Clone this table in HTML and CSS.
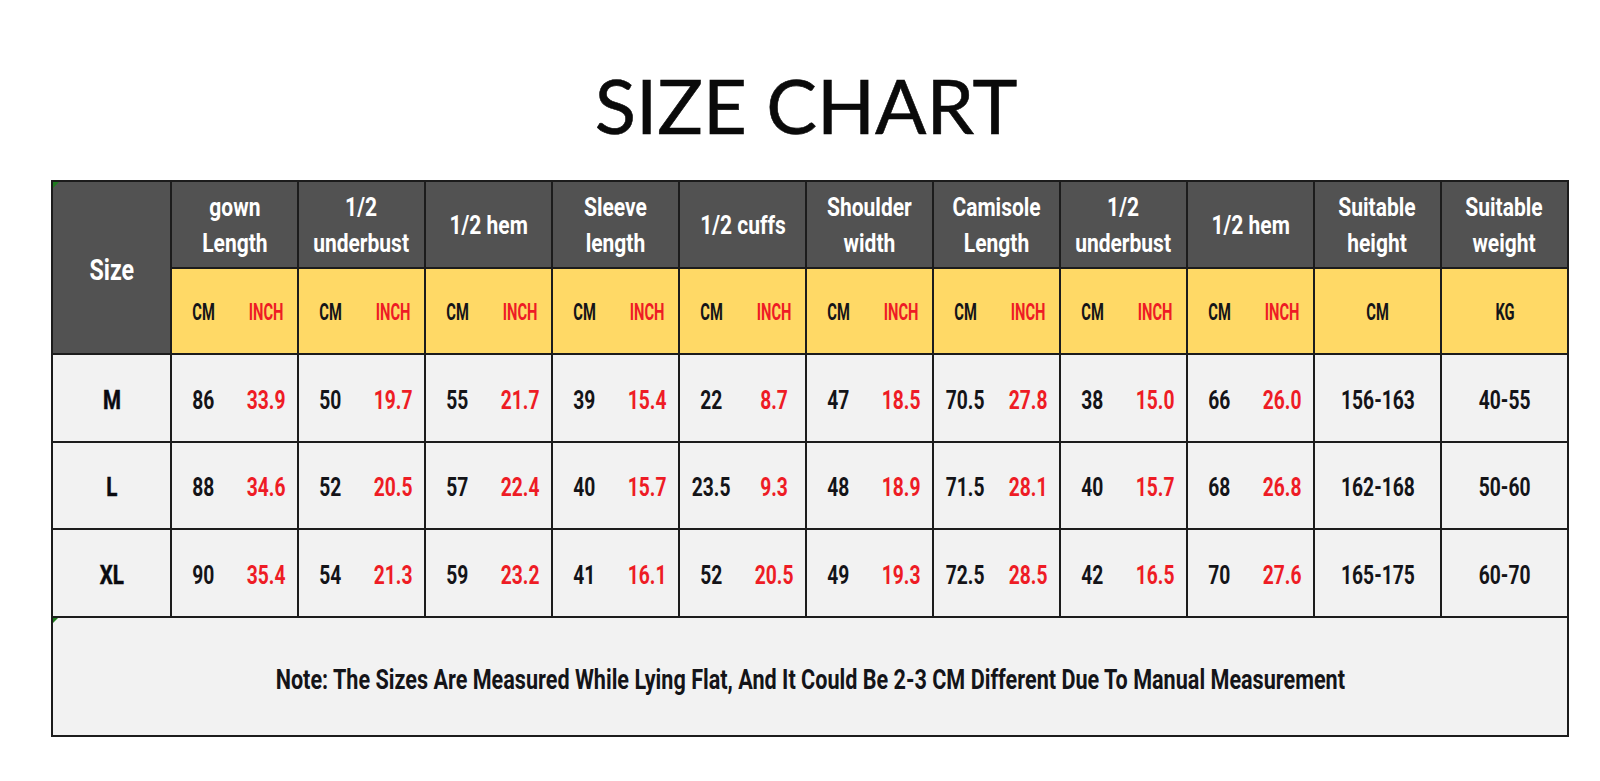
FILE: index.html
```html
<!DOCTYPE html>
<html lang="en">
<head>
<meta charset="utf-8">
<title>Size Chart</title>
<link rel="stylesheet" href="styles.css">
</head>
<body>
<h1 class="title">SIZE CHART</h1>
<div class="chart">
  <div class="cell head size-head"><span class="t">Size</span></div>
  <div class="cell head"><span class="t">gown<br>Length</span></div>
  <div class="cell head"><span class="t">1/2<br>underbust</span></div>
  <div class="cell head"><span class="t">1/2 hem</span></div>
  <div class="cell head"><span class="t">Sleeve<br>length</span></div>
  <div class="cell head"><span class="t">1/2 cuffs</span></div>
  <div class="cell head"><span class="t">Shoulder<br>width</span></div>
  <div class="cell head"><span class="t">Camisole<br>Length</span></div>
  <div class="cell head"><span class="t">1/2<br>underbust</span></div>
  <div class="cell head"><span class="t">1/2 hem</span></div>
  <div class="cell head"><span class="t">Suitable<br>height</span></div>
  <div class="cell head"><span class="t">Suitable<br>weight</span></div>

  <div class="cell unit pair"><span class="t">CM</span><span class="t red">INCH</span></div>
  <div class="cell unit pair"><span class="t">CM</span><span class="t red">INCH</span></div>
  <div class="cell unit pair"><span class="t">CM</span><span class="t red">INCH</span></div>
  <div class="cell unit pair"><span class="t">CM</span><span class="t red">INCH</span></div>
  <div class="cell unit pair"><span class="t">CM</span><span class="t red">INCH</span></div>
  <div class="cell unit pair"><span class="t">CM</span><span class="t red">INCH</span></div>
  <div class="cell unit pair"><span class="t">CM</span><span class="t red">INCH</span></div>
  <div class="cell unit pair"><span class="t">CM</span><span class="t red">INCH</span></div>
  <div class="cell unit pair"><span class="t">CM</span><span class="t red">INCH</span></div>
  <div class="cell unit"><span class="t">CM</span></div>
  <div class="cell unit"><span class="t">KG</span></div>

  <div class="cell body label"><span class="t">M</span></div>
  <div class="cell body pair"><span class="t">86</span><span class="t red">33.9</span></div>
  <div class="cell body pair"><span class="t">50</span><span class="t red">19.7</span></div>
  <div class="cell body pair"><span class="t">55</span><span class="t red">21.7</span></div>
  <div class="cell body pair"><span class="t">39</span><span class="t red">15.4</span></div>
  <div class="cell body pair"><span class="t">22</span><span class="t red">8.7</span></div>
  <div class="cell body pair"><span class="t">47</span><span class="t red">18.5</span></div>
  <div class="cell body pair"><span class="t">70.5</span><span class="t red">27.8</span></div>
  <div class="cell body pair"><span class="t">38</span><span class="t red">15.0</span></div>
  <div class="cell body pair"><span class="t">66</span><span class="t red">26.0</span></div>
  <div class="cell body"><span class="t">156-163</span></div>
  <div class="cell body"><span class="t">40-55</span></div>

  <div class="cell body label"><span class="t">L</span></div>
  <div class="cell body pair"><span class="t">88</span><span class="t red">34.6</span></div>
  <div class="cell body pair"><span class="t">52</span><span class="t red">20.5</span></div>
  <div class="cell body pair"><span class="t">57</span><span class="t red">22.4</span></div>
  <div class="cell body pair"><span class="t">40</span><span class="t red">15.7</span></div>
  <div class="cell body pair"><span class="t">23.5</span><span class="t red">9.3</span></div>
  <div class="cell body pair"><span class="t">48</span><span class="t red">18.9</span></div>
  <div class="cell body pair"><span class="t">71.5</span><span class="t red">28.1</span></div>
  <div class="cell body pair"><span class="t">40</span><span class="t red">15.7</span></div>
  <div class="cell body pair"><span class="t">68</span><span class="t red">26.8</span></div>
  <div class="cell body"><span class="t">162-168</span></div>
  <div class="cell body"><span class="t">50-60</span></div>

  <div class="cell body label"><span class="t">XL</span></div>
  <div class="cell body pair"><span class="t">90</span><span class="t red">35.4</span></div>
  <div class="cell body pair"><span class="t">54</span><span class="t red">21.3</span></div>
  <div class="cell body pair"><span class="t">59</span><span class="t red">23.2</span></div>
  <div class="cell body pair"><span class="t">41</span><span class="t red">16.1</span></div>
  <div class="cell body pair"><span class="t">52</span><span class="t red">20.5</span></div>
  <div class="cell body pair"><span class="t">49</span><span class="t red">19.3</span></div>
  <div class="cell body pair"><span class="t">72.5</span><span class="t red">28.5</span></div>
  <div class="cell body pair"><span class="t">42</span><span class="t red">16.5</span></div>
  <div class="cell body pair"><span class="t">70</span><span class="t red">27.6</span></div>
  <div class="cell body"><span class="t">165-175</span></div>
  <div class="cell body"><span class="t">60-70</span></div>

  <div class="cell note"><span class="t">Note: The Sizes Are Measured While Lying Flat, And It Could Be 2-3 CM Different Due To Manual Measurement</span></div>
</div>
</body>
</html>
```

FILE: styles.css
```css
* {
  box-sizing: border-box;
}

html, body {
  margin: 0;
  padding: 0;
  background: #ffffff;
}

body {
  width: 1600px;
  height: 781px;
  overflow: hidden;
}

.title {
  margin: 67px 0 0 0;
  height: 76px;
  font-family: Lato, "Open Sans", sans-serif;
  font-weight: 400;
  font-size: 76px;
  line-height: 76px;
  color: #0a0a0a;
  text-align: center;
  padding-left: 12px;
  -webkit-text-stroke: 0.6px #0a0a0a;
}

.chart {
  position: relative;
  margin: 37px 0 0 51px;
  width: 1518px;
  display: grid;
  grid-template-columns: 119px repeat(11, 127px);
  grid-template-rows: 87px 86px 88px 87px 88px 119px;
  border-left: 2px solid #1c1c1c;
  border-top: 2px solid #1c1c1c;
  font-family: Roboto, "Noto Sans", sans-serif;
  font-weight: 700;
  color: #141418;
}

.chart::before {
  content: "";
  position: absolute;
  left: 0;
  top: 0;
  width: 0;
  height: 0;
  border-top: 6px solid #1f7a1f;
  border-right: 6px solid transparent;
}

.cell {
  border-right: 2px solid #1c1c1c;
  border-bottom: 2px solid #1c1c1c;
  display: flex;
  align-items: center;
  justify-content: center;
  text-align: center;
}

.t {
  display: inline-block;
  white-space: nowrap;
}

.head {
  background: #525252;
  color: #ffffff;
  font-size: 25px;
  line-height: 36px;
  padding-top: 2px;
}

.head .t {
  transform: scaleX(0.84);
}

.size-head {
  grid-row: span 2;
  font-size: 29px;
  padding-top: 4px;
}

.size-head .t {
  transform: scaleX(0.8);
}

.unit {
  background: #ffd966;
  font-size: 23px;
  padding-top: 2px;
}

.unit .t {
  transform: scaleX(0.64);
}

.body {
  background: #f2f2f2;
  font-size: 25px;
  padding-top: 4px;
}

.body .t {
  transform: scaleX(0.77);
}

.pair {
  display: grid;
  grid-template-columns: 1fr 1fr;
  align-items: center;
  justify-items: center;
}

.red {
  color: #ee1c25;
}

.label {
  font-size: 25px;
  color: #0a0a10;
  -webkit-text-stroke: 0.5px #0a0a10;
}

.label .t {
  transform: scaleX(0.82);
}

.note {
  position: relative;
  grid-column: 1 / -1;
  background: #f2f2f2;
  font-size: 27px;
  padding-top: 6px;
}

.note .t {
  transform: scaleX(0.8);
}

.note::before {
  content: "";
  position: absolute;
  left: 0;
  top: 0;
  width: 0;
  height: 0;
  border-top: 5px solid #1f7a1f;
  border-right: 5px solid transparent;
}
```
